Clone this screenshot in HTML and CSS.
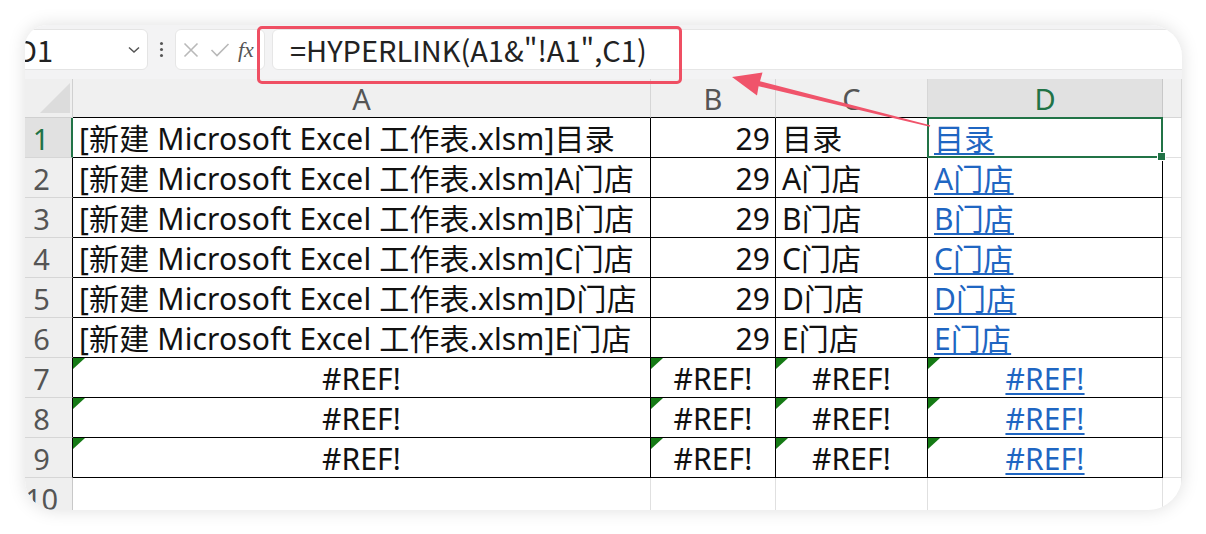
FILE: index.html
```html
<!DOCTYPE html>
<html lang="zh-CN">
<head>
<meta charset="utf-8">
<title>HYPERLINK</title>
<link rel="stylesheet" href="styles.css">
</head>
<body>
<div class="card">
  <div class="fbar">
    <div class="namebox">
      <span class="nb-text">D1</span>
      <svg class="chev" width="12" height="8" viewBox="0 0 12 8"><polyline points="1,1.5 6,6 11,1.5" fill="none" stroke="#555" stroke-width="1.5"/></svg>
    </div>
    <div class="dots"><i></i><i></i><i></i></div>
    <div class="fxbox">
      <svg class="ico" width="16" height="16" viewBox="0 0 16 16"><path d="M1.5 1.5 L14.5 14.5 M14.5 1.5 L1.5 14.5" stroke="#b9b9b9" stroke-width="1.6" fill="none"/></svg>
      <svg class="ico" width="20" height="16" viewBox="0 0 20 16"><polyline points="1.5,8 7,13.5 18.5,2" stroke="#b9b9b9" stroke-width="1.6" fill="none"/></svg>
      <span class="fx">fx</span>
    </div>
    <div class="finput">=HYPERLINK(A1&amp;"!A1",C1)</div>
  </div>
  <div class="sheet">
    <div class="corner"><span class="tri"></span></div>
    <div class="ch">A</div>
    <div class="ch">B</div>
    <div class="ch">C</div>
    <div class="ch sel">D</div>
    <div class="ch ext"></div>

    <div class="rh sel">1</div>
    <div class="c l">[新建 Microsoft Excel 工作表.xlsm]目录</div>
    <div class="c r">29</div>
    <div class="c l">目录</div>
    <div class="c l lk active"><span class="u">目录</span></div>
    <div class="c ext"></div>

    <div class="rh">2</div>
    <div class="c l">[新建 Microsoft Excel 工作表.xlsm]A门店</div>
    <div class="c r">29</div>
    <div class="c l">A门店</div>
    <div class="c l lk"><span class="u">A门店</span></div>
    <div class="c ext"></div>

    <div class="rh">3</div>
    <div class="c l">[新建 Microsoft Excel 工作表.xlsm]B门店</div>
    <div class="c r">29</div>
    <div class="c l">B门店</div>
    <div class="c l lk"><span class="u">B门店</span></div>
    <div class="c ext"></div>

    <div class="rh">4</div>
    <div class="c l">[新建 Microsoft Excel 工作表.xlsm]C门店</div>
    <div class="c r">29</div>
    <div class="c l">C门店</div>
    <div class="c l lk"><span class="u">C门店</span></div>
    <div class="c ext"></div>

    <div class="rh">5</div>
    <div class="c l">[新建 Microsoft Excel 工作表.xlsm]D门店</div>
    <div class="c r">29</div>
    <div class="c l">D门店</div>
    <div class="c l lk"><span class="u">D门店</span></div>
    <div class="c ext"></div>

    <div class="rh">6</div>
    <div class="c l">[新建 Microsoft Excel 工作表.xlsm]E门店</div>
    <div class="c r">29</div>
    <div class="c l">E门店</div>
    <div class="c l lk"><span class="u">E门店</span></div>
    <div class="c ext"></div>

    <div class="rh">7</div>
    <div class="c m err">#REF!</div>
    <div class="c m err">#REF!</div>
    <div class="c m err">#REF!</div>
    <div class="c m err lk"><span class="u">#REF!</span></div>
    <div class="c ext"></div>

    <div class="rh">8</div>
    <div class="c m err">#REF!</div>
    <div class="c m err">#REF!</div>
    <div class="c m err">#REF!</div>
    <div class="c m err lk"><span class="u">#REF!</span></div>
    <div class="c ext"></div>

    <div class="rh">9</div>
    <div class="c m err">#REF!</div>
    <div class="c m err">#REF!</div>
    <div class="c m err">#REF!</div>
    <div class="c m err lk"><span class="u">#REF!</span></div>
    <div class="c ext"></div>

    <div class="rh last">10</div>
    <div class="c blank"></div>
    <div class="c blank"></div>
    <div class="c blank"></div>
    <div class="c blank"></div>
    <div class="c ext"></div>
  </div>
</div>
<div class="redbox"></div>
<svg class="arrow" width="1206" height="534" viewBox="0 0 1206 534">
  <polygon points="732,77 762.5,72.5 760,81.3 930.2,125.2 929.8,126.8 758.6,86.3 757,95.5" fill="#f0546b"/>
</svg>
</body>
</html>
```

FILE: styles.css
```css
* { box-sizing: border-box; }
html, body { margin: 0; padding: 0; background: #ffffff; }
body {
  width: 1206px;
  height: 534px;
  padding: 25px 0 0 25px;
  position: relative;
  overflow: hidden;
  font-family: "Noto Sans CJK SC", "Noto Sans", sans-serif;
}
.card {
  width: 1157px;
  height: 485px;
  border-radius: 22px 32px 34px 30px;
  overflow: hidden;
  background: #ffffff;
  box-shadow: 0 0 18px rgba(0, 0, 0, 0.13);
}
.fbar {
  height: 54px;
  background: #f3f3f4;
  display: flex;
  padding-top: 4px;
  padding-bottom: 9px;
}
.namebox {
  margin-left: -11px;
  width: 134px;
  background: #fff;
  border: 1px solid #e4e4e4;
  border-radius: 6px;
  display: flex;
  align-items: center;
  padding-left: 2px;
  position: relative;
}
.nb-text {
  font-size: 29px;
  color: #222;
  line-height: 39px;
  flex: 1;
}
.chev { margin-right: 7px; }
.dots {
  width: 27px;
  display: flex;
  flex-direction: column;
  align-items: center;
  justify-content: center;
  gap: 3px;
}
.dots i {
  display: block;
  width: 3px;
  height: 3px;
  border-radius: 50%;
  background: #555;
}
.fxbox {
  width: 90px;
  background: #fff;
  border: 1px solid #e6e6e6;
  border-radius: 6px;
  display: flex;
  align-items: center;
  padding-left: 7px;
  gap: 11px;
}
.fx {
  font-family: "Liberation Serif", serif;
  font-style: italic;
  font-size: 22px;
  color: #555;
  margin-left: -3px;
}
.finput {
  flex: 1;
  margin-left: 7px;
  margin-right: -12px;
  background: #fff;
  border: 1px solid #e6e6e6;
  border-radius: 6px;
  font-size: 29px;
  color: #222;
  line-height: 39px;
  padding-left: 17px;
}
.sheet {
  display: grid;
  grid-template-columns: 48px 578px 125px 152px 235px 1fr;
  grid-template-rows: 39px;
  grid-auto-rows: 40px;
  font-family: "Noto Sans", "Noto Sans CJK SC", sans-serif;
  font-size: 30px;
  letter-spacing: 0.15px;
  color: #111;
}
.corner {
  background: #efefef;
  border-right: 1px solid #d0d0d0;
  border-bottom: 1px solid #d0d0d0;
  position: relative;
}
.tri {
  position: absolute;
  left: 15px;
  bottom: 4px;
  width: 30px;
  height: 30px;
  background: #dcdcdc;
  clip-path: polygon(100% 0, 100% 100%, 0 100%);
}
.ch {
  background: #f0f0f0;
  border-right: 1px solid #d6d6d6;
  border-bottom: 1px solid #000;
  text-align: center;
  color: #555;
  font-size: 29px;
  letter-spacing: 0;
  line-height: 36px;
  padding-top: 2px;
}
.ch.sel { background: #e1e1e1; color: #217346; border-right-color: #c8c8c8; }
.ch.ext { border-bottom-color: #d6d6d6; }
.rh {
  background: #efefef;
  border-right: 1px solid #000;
  border-bottom: 1px solid #d6d6d6;
  color: #555;
  font-size: 29px;
  letter-spacing: 0;
  line-height: 36px;
  padding-top: 3px;
  text-align: center;
  padding-right: 14px;
}
.rh.sel { background: #e1e1e1; color: #217346; border-right: 2px solid #217346; }
.rh.last { border-right-color: #c8c8c8; }
.c {
  border-right: 1px solid #000;
  border-bottom: 1px solid #000;
  line-height: 36px;
  padding-top: 3px;
  white-space: nowrap;
  position: relative;
}
.c.l { padding-left: 6px; }
.c.r { text-align: right; padding-right: 5px; }
.c.m { text-align: center; }
.c.ext, .c.blank { border-right-color: #e0e0e0; border-bottom-color: #e0e0e0; }
.lk { color: #1f66c2; }
.u {
  text-decoration: underline;
  text-decoration-thickness: 1.5px;
  text-underline-offset: 3px;
}
.err::before {
  content: "";
  position: absolute;
  left: 0;
  top: 0;
  width: 12px;
  height: 11px;
  background: #157a15;
  clip-path: polygon(0 0, 100% 0, 0 100%);
}
.active::after {
  content: "";
  position: absolute;
  left: -1px;
  top: -1px;
  right: -1px;
  bottom: -1px;
  border: 2px solid #217346;
  pointer-events: none;
}
.active::before {
  content: "";
  position: absolute;
  right: -4px;
  bottom: -4px;
  width: 7px;
  height: 7px;
  background: #217346;
  border: 1px solid #fff;
  z-index: 2;
}
.redbox {
  position: absolute;
  left: 257px;
  top: 26px;
  width: 425px;
  height: 58px;
  border: 3.5px solid #ef4f63;
  border-radius: 5px;
}
.arrow {
  position: absolute;
  left: 0;
  top: 0;
  pointer-events: none;
}
```
